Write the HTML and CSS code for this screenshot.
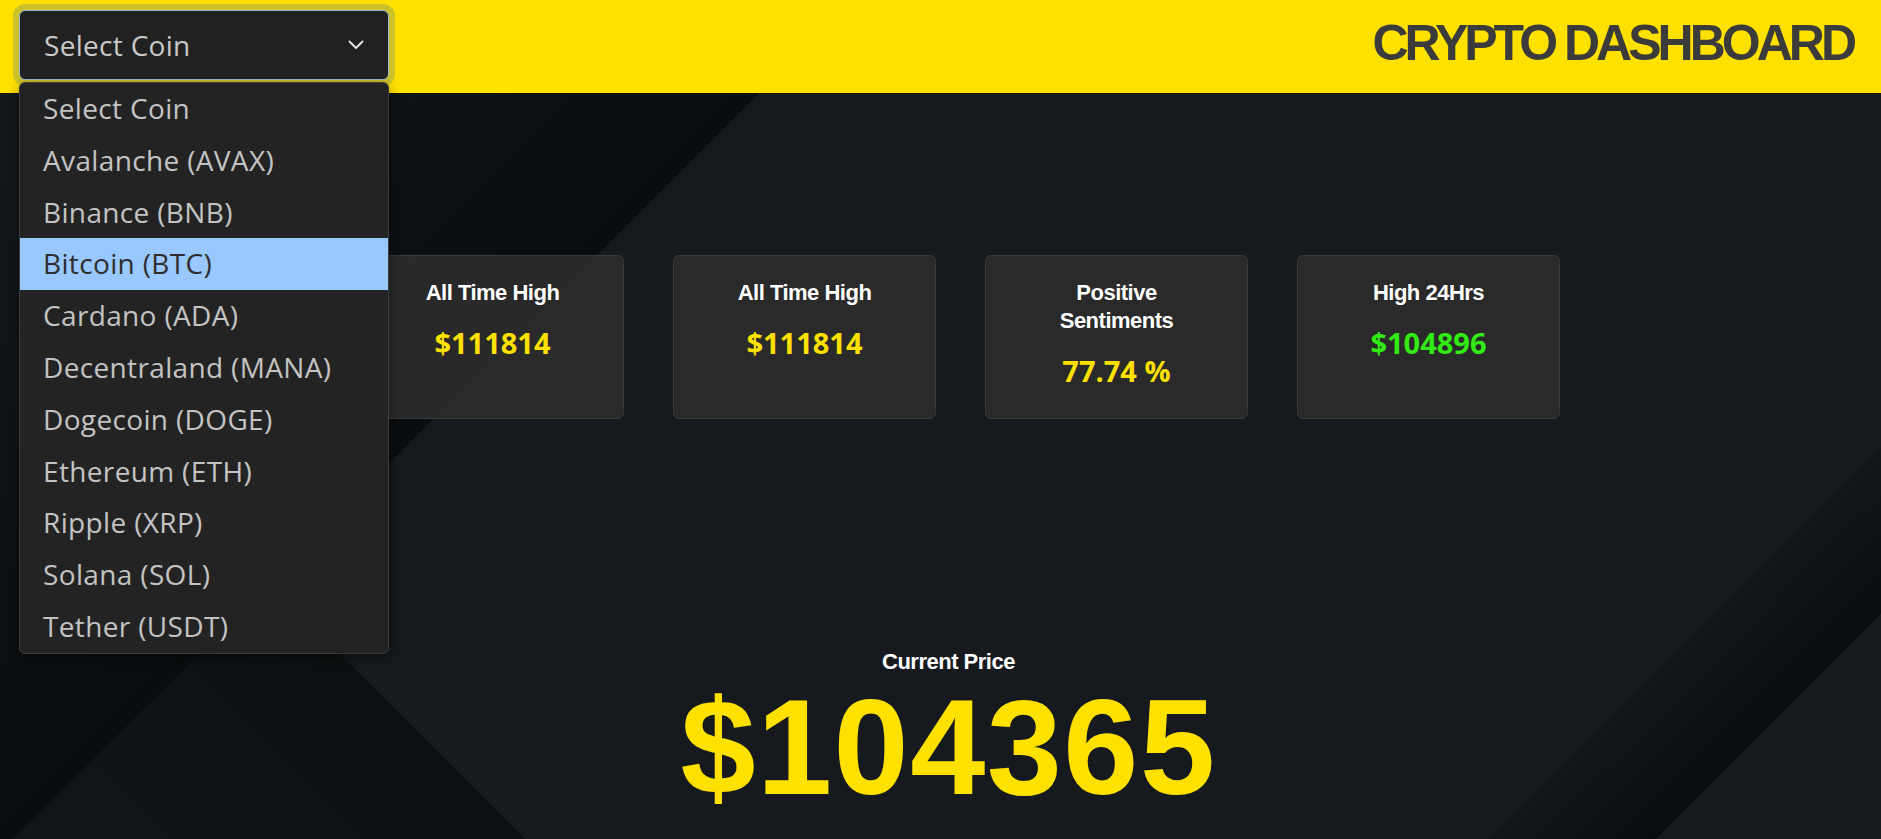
FILE: index.html
```html
<!DOCTYPE html>
<html lang="en">
<head>
<meta charset="utf-8">
<title>Crypto Dashboard</title>
<link rel="stylesheet" href="styles.css">
</head>
<body>
<header class="topbar">
  <div class="coin-select">
    <div class="select-box">
      <span class="select-text">Select Coin</span>
      <svg class="chevron" width="16" height="10" viewBox="0 0 16 10"><polyline points="1.5,1.5 8,8 14.5,1.5" fill="none" stroke="#e2e2e2" stroke-width="2" stroke-linecap="round" stroke-linejoin="round"/></svg>
    </div>
    <ul class="select-list">
      <li>Select Coin</li>
      <li>Avalanche (AVAX)</li>
      <li>Binance (BNB)</li>
      <li class="active">Bitcoin (BTC)</li>
      <li>Cardano (ADA)</li>
      <li>Decentraland (MANA)</li>
      <li>Dogecoin (DOGE)</li>
      <li>Ethereum (ETH)</li>
      <li>Ripple (XRP)</li>
      <li>Solana (SOL)</li>
      <li>Tether (USDT)</li>
    </ul>
  </div>
  <h1 class="brand">CRYPTO DASHBOARD</h1>
</header>
<main class="dashboard">
  <section class="stats">
    <div class="card">
      <div class="card-title">All Time High</div>
      <div class="card-value yellow">$111814</div>
    </div>
    <div class="card">
      <div class="card-title">All Time High</div>
      <div class="card-value yellow">$111814</div>
    </div>
    <div class="card">
      <div class="card-title">Positive Sentiments</div>
      <div class="card-value yellow">77.74 %</div>
    </div>
    <div class="card">
      <div class="card-title">High 24Hrs</div>
      <div class="card-value green">$104896</div>
    </div>
  </section>
  <section class="current">
    <div class="current-label">Current Price</div>
    <div class="current-value">$104365</div>
  </section>
</main>
</body>
</html>
```
FILE: styles.css
```css
* { box-sizing: border-box; }

html, body {
  margin: 0;
  padding: 0;
  height: 100%;
  overflow: hidden;
}

body {
  background: #161a1e;
  font-family: "Liberation Sans", Arial, sans-serif;
}

.topbar {
  height: 93px;
  background: #ffe100;
  display: flex;
  justify-content: space-between;
  align-items: flex-start;
  padding: 10px 28px 0 19px;
  position: relative;
  z-index: 5;
}

.coin-select {
  position: relative;
  width: 370px;
}

.select-box {
  width: 370px;
  height: 70px;
  background: #212121;
  border: 1px solid #9fb6cf;
  border-radius: 6px;
  box-shadow: 0 0 0 6px #cdc12a;
  display: flex;
  align-items: center;
  justify-content: space-between;
  padding: 0 24px 0 24px;
}

.select-text {
  font-family: "Open Sans", "Noto Sans", sans-serif;
  font-size: 28px;
  letter-spacing: 0.3px;
  color: #c9c9c9;
}

.chevron { display: block; }

.select-list {
  position: absolute;
  top: 72px;
  left: 0;
  width: 370px;
  margin: 0;
  padding: 0;
  list-style: none;
  background: #232323;
  border: 1px solid #3c3c3c;
  border-radius: 6px;
  overflow: hidden;
  box-shadow: 0 4px 12px rgba(0, 0, 0, 0.45);
  z-index: 10;
}

.select-list li {
  height: 51.8px;
  line-height: 51.8px;
  padding-left: 23px;
  font-family: "Open Sans", "Noto Sans", sans-serif;
  font-size: 28px;
  letter-spacing: 0.35px;
  color: #c3c3c3;
  white-space: nowrap;
}

.select-list li.active {
  background: #99c8ff;
  color: #2e2e2e;
}

.brand {
  margin: 5px 0 0 0;
  font-family: "Liberation Sans", Arial, sans-serif;
  font-weight: 700;
  font-size: 50px;
  line-height: 56px;
  letter-spacing: -4px;
  color: #3b3b3b;
}

.dashboard {
  min-height: 746px;
  padding-top: 162px;
  background:
    linear-gradient(135deg, #15181b 0px, #0a0d0f 537px, transparent 537px),
    linear-gradient(225deg, transparent 1486px, #0d1012 1486px, #131618 1857px),
    linear-gradient(135deg, transparent 1580px, #13171a 1580px, #0a0d0f 1698px, transparent 1698px),
    #161a1e;
}

.stats {
  display: flex;
  gap: 49px;
  padding-left: 361px;
}

.card {
  width: 263px;
  height: 164px;
  background: rgba(44, 44, 44, 0.94);
  border: 1px solid #3a3a3a;
  border-radius: 6px;
  padding-top: 23px;
  text-align: center;
}

.card-title {
  max-width: 170px;
  margin: 0 auto;
  font-weight: 700;
  font-size: 22px;
  line-height: 28px;
  letter-spacing: -0.5px;
  color: #ffffff;
}

.card-value {
  margin-top: 16px;
  font-family: "Open Sans", "Noto Sans", sans-serif;
  font-weight: 700;
  font-size: 29px;
  line-height: 40px;
}

.yellow { color: #ffe100; }
.green { color: #33eb14; }

.current {
  margin-top: 229px;
  padding-left: 16px;
  text-align: center;
}

.current-label {
  font-weight: 700;
  font-size: 22px;
  line-height: 28px;
  letter-spacing: -0.5px;
  color: #ffffff;
}

.current-value {
  margin-top: 4px;
  font-weight: 700;
  font-size: 135px;
  line-height: 135px;
  letter-spacing: 1.5px;
  color: #ffe100;
}
```
